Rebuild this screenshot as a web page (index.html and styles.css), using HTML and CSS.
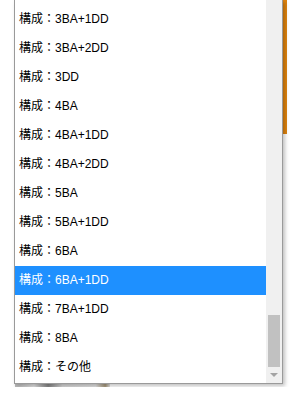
FILE: index.html
```html
<!DOCTYPE html>
<html lang="ja">
<head>
<meta charset="UTF-8" />
<title>構成</title>
<link rel="stylesheet" href="styles.css">
</head>
<body>

<div class="stage">
  <div class="dropdown">
    <ul class="options">
      <li>構成：3BA+1DD</li>
      <li>構成：3BA+2DD</li>
      <li>構成：3DD</li>
      <li>構成：4BA</li>
      <li>構成：4BA+1DD</li>
      <li>構成：4BA+2DD</li>
      <li>構成：5BA</li>
      <li>構成：5BA+1DD</li>
      <li>構成：6BA</li>
      <li class="selected">構成：6BA+1DD</li>
      <li>構成：7BA+1DD</li>
      <li>構成：8BA</li>
      <li>構成：その他</li>
    </ul>
    <div class="scrollbar">
      <div class="track"></div>
      <div class="thumb"></div>
      <div class="arrow">
        <svg width="8" height="4" viewBox="0 0 8 4"><path d="M0 0h8L4 4z" fill="#a3a3a3"/></svg>
      </div>
    </div>
  </div>
  <div class="edge">
    <div class="edge-bar"></div>
  </div>
</div>
<div class="under"></div>

</body>
</html>
```

FILE: styles.css
```css
body {
  margin: 0;
  background: #fff;
  font-family: 'Liberation Sans', Arial, 'Noto Sans CJK JP', sans-serif;
  overflow: hidden;
}
.stage {
  display: flex;
  align-items: flex-start;
  padding-left: 14px;
}
.dropdown {
  display: flex;
  width: 267px;
  height: 383px;
  border: 1px solid #9a9a9a;
  border-top: none;
  background: #fff;
  box-shadow: 2px 2px 4px rgba(0,0,0,0.25);
  overflow: hidden;
  position: relative;
  z-index: 1;
}
.options {
  list-style: none;
  margin: 0;
  padding: 5px 0 0 0;
  width: 251px;
}
.options li {
  height: 29px;
  line-height: 29px;
  padding-left: 4px;
  font-size: 12px;
  color: #000;
  white-space: nowrap;
}
.options li.selected {
  background: #1e90ff;
  color: #fff;
}
.scrollbar {
  width: 16px;
  background: #f0f0f0;
  display: flex;
  flex-direction: column;
}
.track {
  height: 315px;
}
.thumb {
  height: 52px;
  margin: 0 2px;
  background: #c1c1c1;
}
.arrow {
  flex: 1;
  display: flex;
  align-items: center;
  justify-content: center;
}
.edge {
  width: 4px;
  height: 384px;
}
.edge-bar {
  height: 134px;
  background: #e0840e;
}
.under {
  margin-left: 15px;
  width: 95px;
  height: 3px;
  background: linear-gradient(90deg, #8a8a8a, #ccc 20%, #333 35%, #bbb 50%, #ccc 85%, #6a5020 95%, #ccc);
  opacity: 0.6;
}
```
